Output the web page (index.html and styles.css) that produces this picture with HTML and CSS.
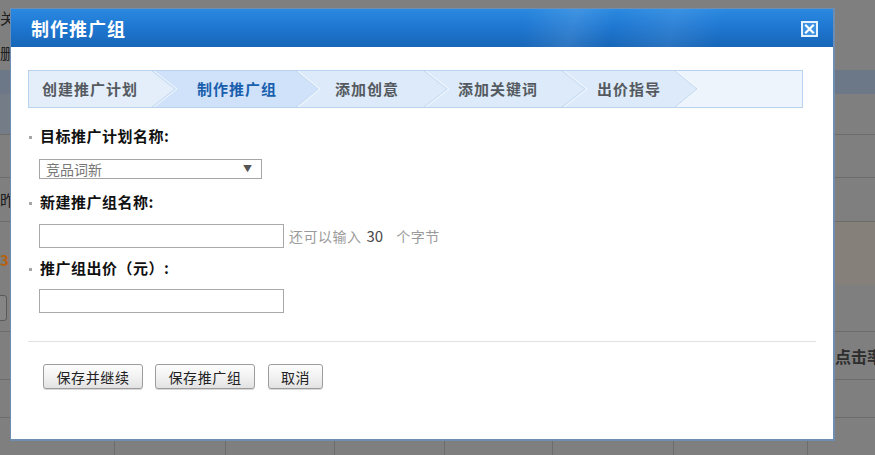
FILE: index.html
```html
<!DOCTYPE html>
<html lang="zh-CN">
<head>
<meta charset="utf-8">
<title>制作推广组</title>
<link rel="stylesheet" href="styles.css">
</head>
<body>
<div class="page">
  <div class="row r1"><span class="bgtext t1">关键词</span></div>
  <div class="row r2"><span class="bgtext t2">删除</span></div>
  <div class="row r3"></div>
  <div class="row r4 line"></div>
  <div class="row r5 line"></div>
  <div class="row r6 line"><span class="bgtext t3">昨日</span></div>
  <div class="row r7"><span class="bgtext num">3</span></div>
  <div class="row r8 line"><span class="bgbtn"></span></div>
  <div class="row r9 line"><span class="bgtext rt">点击率</span></div>
  <div class="row r10 line"></div>
  <div class="row r11">
    <span class="cell c1"></span><span class="cell c2"></span><span class="cell c3"></span><span class="cell c4"></span><span class="cell c5"></span><span class="cell c6"></span><span class="cell c7"></span>
  </div>
</div>

<div class="dialog">
  <div class="dlg-head">
    <span class="dlg-title">制作推广组</span>
    <svg class="dlg-close" width="17" height="16" viewBox="0 0 17 16">
      <rect x="1" y="1" width="15" height="14" fill="#3d91e2" stroke="#e4f1ff" stroke-width="2"/>
      <path d="M5 4.5 L12 11.5 M12 4.5 L5 11.5" stroke="#ffffff" stroke-width="2.2" stroke-linecap="square"/>
    </svg>
  </div>
  <div class="dlg-body">
    <div class="steps">
      <svg class="steps-bg" width="773" height="36" viewBox="0 0 773 36">
        <polygon points="0,0 123,0 146,18 123,36 0,36" fill="#e3eefa"/>
        <polygon points="123,0 267,0 289,18 267,36 123,36 146,18" fill="#cfe2f9"/>
        <polygon points="267,0 395,0 418,18 395,36 267,36 289,18" fill="#dceaf9"/>
        <polygon points="395,0 533,0 556,18 533,36 395,36 418,18" fill="#dceaf9"/>
        <polygon points="533,0 646,0 668,18 646,36 533,36 556,18" fill="#dceaf9"/>
        <polygon points="646,0 773,0 773,36 646,36 668,18" fill="#edf4fc"/>
        <g fill="none" stroke="#c4d9f0" stroke-width="1">
          <polyline points="123,0 146,18 123,36"/>
          <polyline points="267,0 289,18 267,36"/>
          <polyline points="395,0 418,18 395,36"/>
          <polyline points="533,0 556,18 533,36"/>
          <polyline points="646,0 668,18 646,36"/>
        </g>
        <g fill="none" stroke="#f3f8fe" stroke-width="1">
          <polyline points="125,0 148,18 125,36"/>
          <polyline points="269,0 291,18 269,36"/>
          <polyline points="397,0 420,18 397,36"/>
          <polyline points="535,0 558,18 535,36"/>
          <polyline points="648,0 670,18 648,36"/>
        </g>
      </svg>
      <span class="step s1">创建推广计划</span>
      <span class="step s2 active">制作推广组</span>
      <span class="step s3">添加创意</span>
      <span class="step s4">添加关键词</span>
      <span class="step s5">出价指导</span>
    </div>

    <div class="form">
      <div class="field-label lb1"><i class="dot"></i>目标推广计划名称:</div>
      <div class="select"><span class="select-text">竞品词新</span><span class="select-arrow">▼</span></div>

      <div class="field-label lb2"><i class="dot"></i>新建推广组名称:</div>
      <div class="input-row ir1">
        <span class="input"></span>
        <span class="hint">还可以输入</span><span class="hint-num">30</span><span class="hint hint-tail">个字节</span>
      </div>

      <div class="field-label lb3"><i class="dot"></i>推广组出价（元）:</div>
      <div class="input-row ir2"><span class="input"></span></div>
    </div>

    <div class="divider"></div>

    <div class="buttons">
      <span class="btn b-wide">保存并继续</span>
      <span class="btn b-wide">保存推广组</span>
      <span class="btn b-small">取消</span>
    </div>
  </div>
</div>
</body>
</html>
```

FILE: styles.css
```css
* { box-sizing: border-box; }
html, body { margin: 0; padding: 0; }
body {
  width: 875px;
  height: 455px;
  overflow: hidden;
  position: relative;
  background: #7f7f7f;
  font-family: "Noto Sans CJK SC", "Noto Sans", sans-serif;
}

/* background page (dimmed) */
.page { width: 875px; }
.row { display: flex; align-items: center; width: 875px; overflow: hidden; }
.row.line { border-bottom: 1px solid #6c6c6c; }
.r1 { height: 35px; }
.r2 { height: 35px; }
.r3 { height: 24px; background: #6c7788; }
.r4 { height: 41px; background: linear-gradient(90deg, #747c88 0, #747c88 10px, #7f7f7f 10px); }
.r5 { height: 43px; }
.r6 { height: 44px; }
.r7 {
  height: 63px;
  align-items: flex-start;
  padding-top: 28px;
  background: linear-gradient(90deg, #7f7f7f 0, #7f7f7f 835px, #85807a 835px);
}
.r8 { height: 47px; }
.r9 { height: 48px; }
.r10 { height: 38px; }
.r11 { height: 37px; align-items: stretch; }
.cell { border-right: 1px solid #6c6c6c; flex: none; }
.c1 { width: 115px; }
.c2 { width: 111px; }
.c3 { width: 109px; }
.c4 { width: 110px; }
.c5 { width: 108px; }
.c6 { width: 121px; }
.c7 { width: 134px; }

.bgtext { font-size: 15px; line-height: 20px; color: #202020; white-space: nowrap; flex: none; }
.t1 { margin-left: 0; }
.t2 { margin-left: 0; }
.t3 { margin-left: 0; }
.num { margin-left: 0; color: #b8600e; font-weight: 700; font-size: 15px; }
.rt { margin-left: 835px; font-weight: 700; font-size: 16px; color: #2e2e2e; }
.bgbtn {
  flex: none;
  width: 20px; height: 26px;
  margin-left: -13px;
  border: 1px solid #5a5a5a;
  border-radius: 3px;
  background: #858585;
}

/* dialog */
.dialog {
  position: absolute;
  left: 10px;
  top: 8px;
  width: 825px;
  height: 433px;
  background: #ffffff;
  border: 1px solid #6f8db0;
  border-right-width: 2px;
  border-bottom-width: 2px;
}
.dlg-head {
  height: 38px;
  display: flex;
  align-items: center;
  justify-content: space-between;
  padding: 0 15px 0 20px;
  background:
    linear-gradient(105deg, rgba(255,255,255,0) 62%, rgba(255,255,255,0.10) 68%, rgba(255,255,255,0) 73%, rgba(255,255,255,0.08) 80%, rgba(255,255,255,0) 86%),
    linear-gradient(180deg, #2a89e0 0%, #1f78d2 45%, #1766b8 100%);
}
.dlg-title {
  color: #ffffff;
  font-size: 18px;
  font-weight: 700;
  letter-spacing: 1px;
  line-height: 20px;
}
.dlg-close { display: block; margin-top: 1px; }

.dlg-body { padding: 23px 17px 0 17px; }

.steps {
  position: relative;
  width: 775px;
  height: 38px;
  border: 1px solid #b9d2ee;
  display: flex;
  align-items: center;
  padding-left: 13px;
}
.steps-bg { position: absolute; left: 0; top: 0; }
.step {
  position: relative;
  flex: none;
  font-size: 15px;
  font-weight: 700;
  letter-spacing: 1px;
  color: #555a60;
  line-height: 20px;
}
.step.active { color: #1a5fae; }
.s1 { width: 155px; }
.s2 { width: 138px; }
.s3 { width: 123px; }
.s4 { width: 139px; }

.form { padding-top: 17px; }
.field-label {
  display: flex;
  align-items: center;
  height: 20px;
  font-size: 15px;
  font-weight: 700;
  letter-spacing: 0.5px;
  color: #111111;
  padding-left: 1px;
}
.dot {
  display: block;
  width: 3px;
  height: 3px;
  background: #a6a6a6;
  margin-right: 8px;
  margin-top: 4px;
}
.lb1 { margin-bottom: 14px; }
.lb2 { margin-bottom: 13px; }
.lb3 { margin-bottom: 12px; }

.select {
  margin-left: 11px;
  width: 223px;
  height: 20px;
  border: 1px solid #a5a5a5;
  display: flex;
  align-items: center;
  justify-content: space-between;
  padding: 0 9px 0 6px;
  margin-bottom: 12px;
}
.select-text { font-size: 14px; color: #777777; line-height: 18px; }
.select-arrow { font-size: 9px; color: #555555; line-height: 10px; }

.input-row { display: flex; align-items: center; margin-left: 11px; height: 24px; }
.ir1 { margin-bottom: 9px; }
.ir2 { margin-bottom: 28px; }
.input {
  width: 245px;
  height: 24px;
  border: 1px solid #a9a9a9;
  background: #fff;
  flex: none;
}
.hint { font-size: 14px; color: #9a9a9a; letter-spacing: 0.5px; margin-left: 5px; line-height: 20px; }
.hint-num { font-size: 15px; color: #4a4a4a; margin-left: 5px; line-height: 20px; }
.hint-tail { margin-left: 13px; }

.divider { height: 1px; background: #e2e2e2; margin-bottom: 22px; }

.buttons { display: flex; margin-left: 15px; }
.btn {
  height: 25px;
  border: 1px solid #9c9c9c;
  border-radius: 3px;
  background: linear-gradient(180deg, #fdfdfd 0%, #f1f1f1 55%, #e2e2e2 100%);
  box-shadow: 0 1px 0 #d8d8d8;
  font-size: 14px;
  letter-spacing: 0.6px;
  color: #222222;
  display: flex;
  align-items: center;
  justify-content: center;
  margin-right: 12px;
}
.b-wide { width: 100px; }
.b-small { width: 55px; margin-left: 1px; }
```
